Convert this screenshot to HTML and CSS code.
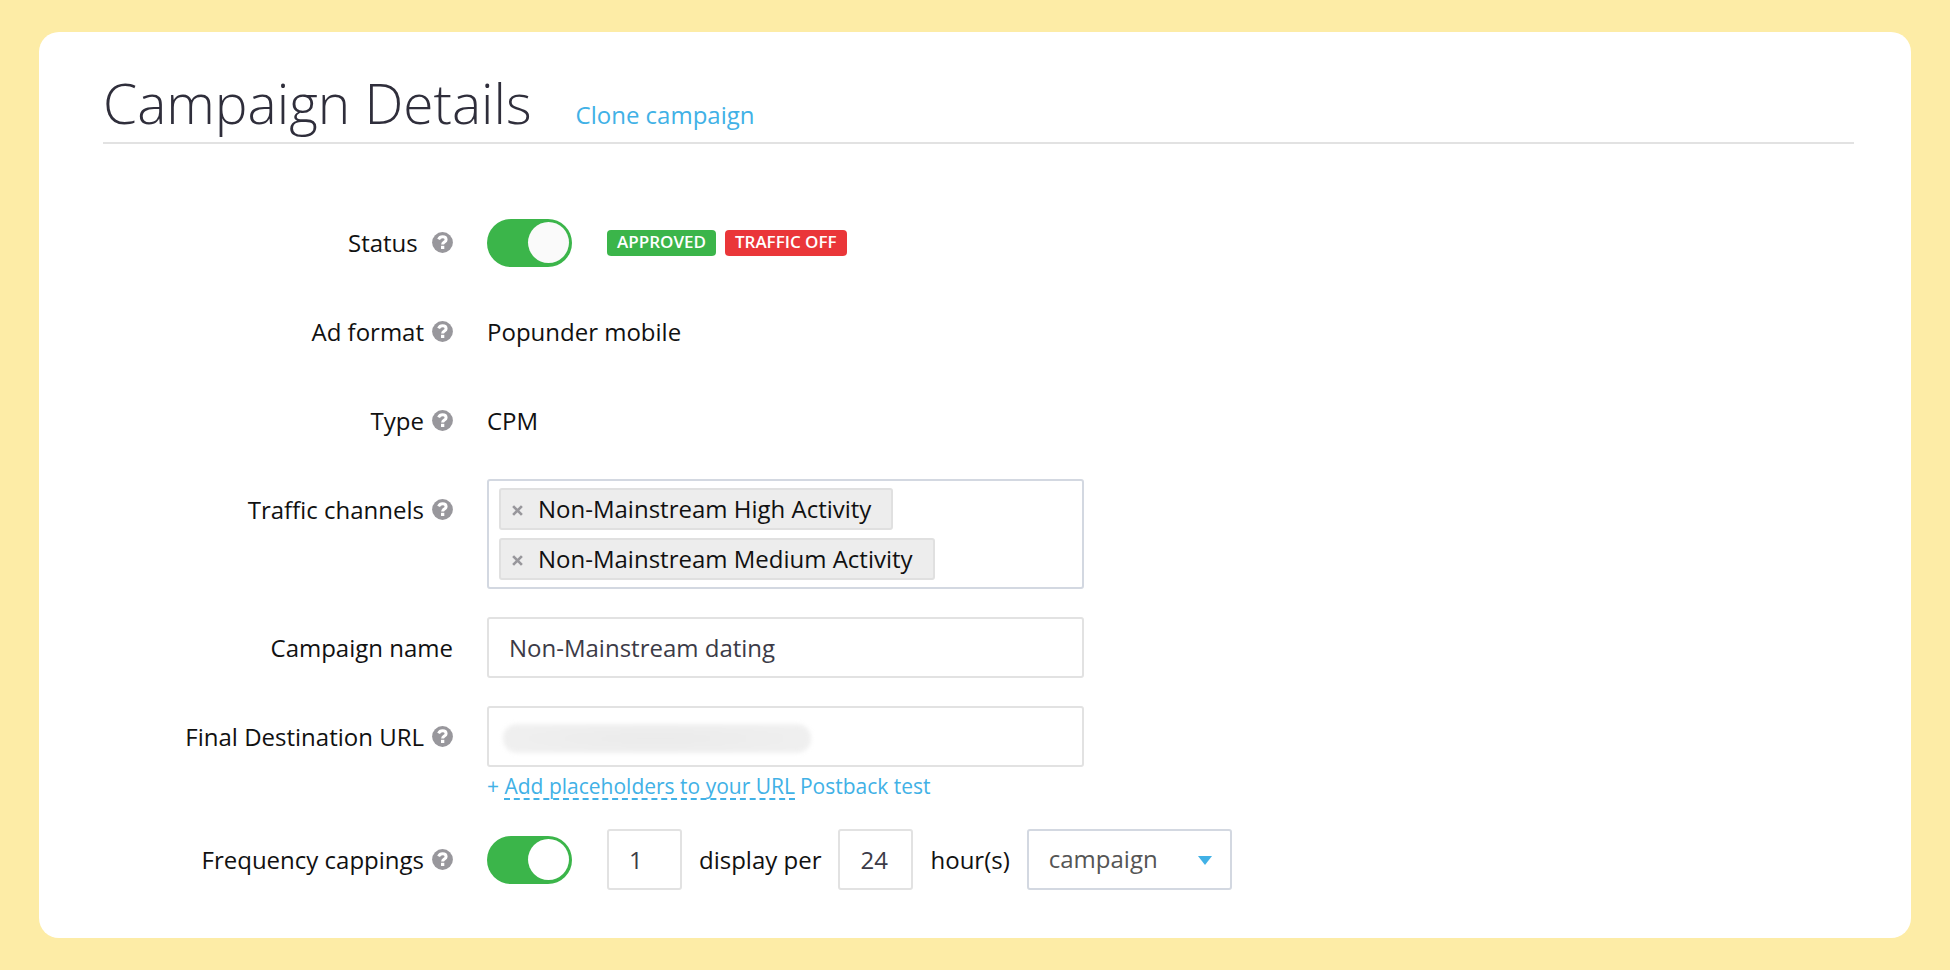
FILE: index.html
```html
<!DOCTYPE html>
<html lang="en">
<head>
    <meta charset="UTF-8">
    <meta name="viewport" content="width=device-width, initial-scale=1.0">
    <title>Campaign Details</title>
    <link rel="stylesheet" href="styles.css">
</head>
<body>
    <!-- Help icon shared by the labels -->
    <svg class="sprite" aria-hidden="true">
        <symbol id="help" viewBox="0 0 21 21">
            <circle cx="10.5" cy="10.5" r="10.4" fill="#98979c"/>
            <path d="M6.6 7.4C7.4 5.6 8.9 4.8 10.5 4.8c2.2 0 3.6 1.2 3.6 2.9 0 2.4-3.5 2.4-3.5 4.9" fill="none" stroke="#fff" stroke-width="3"/>
            <rect x="9" y="13.8" width="3.3" height="3.2" fill="#fff"/>
        </symbol>
    </svg>

    <main class="card">
        <header class="card-header">
            <h1>Campaign Details</h1>
            <a href="#" class="clone-link">Clone campaign</a>
        </header>

        <form class="details">
            <div class="row">
                <label class="row-label" for="status">Status&nbsp;<svg class="help"><use href="#help"/></svg></label>
                <div class="row-content">
                    <input type="checkbox" class="toggle" id="status" checked>
                    <div class="badges">
                        <span class="badge approved">APPROVED</span>
                        <span class="badge traffic-off">TRAFFIC OFF</span>
                    </div>
                </div>
            </div>

            <div class="row">
                <span class="row-label">Ad format<svg class="help"><use href="#help"/></svg></span>
                <div class="row-content">Popunder mobile</div>
            </div>

            <div class="row">
                <span class="row-label">Type<svg class="help"><use href="#help"/></svg></span>
                <div class="row-content">CPM</div>
            </div>

            <div class="row">
                <span class="row-label" id="channelsLabel">Traffic channels<svg class="help"><use href="#help"/></svg></span>
                <ul class="channels" aria-labelledby="channelsLabel">
                    <li class="channel">
                        <button type="button" class="remove" aria-label="Remove"><svg viewBox="0 0 10 10"><path d="M1 1l8 8M9 1L1 9"/></svg></button>
                        Non-Mainstream High Activity
                    </li>
                    <li class="channel">
                        <button type="button" class="remove" aria-label="Remove"><svg viewBox="0 0 10 10"><path d="M1 1l8 8M9 1L1 9"/></svg></button>
                        Non-Mainstream Medium Activity
                    </li>
                </ul>
            </div>

            <div class="row">
                <label class="row-label" for="campaignName">Campaign name</label>
                <input type="text" class="field" id="campaignName" value="Non-Mainstream dating">
            </div>

            <div class="row">
                <label class="row-label" for="destinationUrl">Final Destination URL<svg class="help"><use href="#help"/></svg></label>
                <div class="url-group">
                    <input type="text" class="field" id="destinationUrl">
                    <span class="redacted"></span>
                    <div class="url-links">
                        <a href="#">+ <span class="dashed">Add placeholders to your URL</span></a>
                        <a href="#">Postback test</a>
                    </div>
                </div>
            </div>

            <div class="row">
                <label class="row-label" for="capping">Frequency cappings<svg class="help"><use href="#help"/></svg></label>
                <div class="row-content">
                    <input type="checkbox" class="toggle white" id="capping" checked>
                    <div class="capping">
                        <input type="text" class="field small" id="displays" value="1">
                        <label for="displays">display per</label>
                        <input type="text" class="field small" id="hours" value="24">
                        <label for="hours">hour(s)</label>
                        <div class="select">
                            <select class="field" aria-label="Capping scope">
                                <option>campaign</option>
                            </select>
                            <svg class="arrow" viewBox="0 0 14 9"><path d="M0 0h14L7 9z"/></svg>
                        </div>
                    </div>
                </div>
            </div>
        </form>
    </main>
</body>
</html>
```
FILE: styles.css
```css
* {
    box-sizing: border-box;
}

body {
    margin: 0;
    padding: 32px 39px;
    background: #fdeca6;
    color: #111;
    font-family: "Open Sans", "Noto Sans", sans-serif;
    font-size: 24px;
    line-height: 33px;
}

a {
    color: #41b1e6;
    text-decoration: none;
}

.sprite {
    position: absolute;
    width: 0;
    height: 0;
}

.card {
    background: #fff;
    border-radius: 20px;
    padding: 33px 57px 48px 64px;
}

.card-header {
    display: flex;
    align-items: baseline;
    gap: 44px;
    padding-bottom: 1px;
    border-bottom: 2px solid #e2e2e2;
    margin-bottom: 68px;
}

h1 {
    margin: 0;
    color: #2f2e3b;
    font-size: 55px;
    font-weight: 300;
    line-height: 76px;
}

.details {
    display: flex;
    flex-direction: column;
    gap: 28px;
}

.row {
    display: flex;
    align-items: flex-start;
    gap: 34px;
}

.row-label {
    display: flex;
    align-items: center;
    justify-content: flex-end;
    gap: 8px;
    width: 350px;
    min-height: 61px;
}

.help {
    width: 21px;
    height: 21px;
}

.row-content {
    display: flex;
    align-items: center;
    gap: 35px;
    min-height: 61px;
}

/* Toggles */
.toggle {
    appearance: none;
    display: flex;
    align-items: center;
    justify-content: flex-end;
    width: 85px;
    height: 48px;
    margin: 0;
    padding: 3px;
    border-radius: 24px;
    background: #3bb54a;
    cursor: pointer;
}

.toggle::before {
    content: "";
    width: 41px;
    height: 41px;
    border-radius: 50%;
    background: #fafafa;
}

.toggle.white::before {
    background: #fff;
}

/* Badges */
.badges {
    display: flex;
    gap: 9px;
}

.badge {
    padding: 0 10px 2px;
    border-radius: 4px;
    color: #fff;
    font-size: 17px;
    font-weight: 600;
    line-height: 24px;
}

.approved {
    background: #3bb54a;
}

.traffic-off {
    background: #ea3639;
}

/* Fields */
.field {
    width: 597px;
    height: 61px;
    padding: 0 20px 1px;
    border: 2px solid #e2e2e2;
    border-radius: 3px;
    background: #fff;
    color: #3c3b47;
    font-family: inherit;
    font-size: 24px;
}

.field.small {
    width: 75px;
}

.channels {
    display: flex;
    flex-direction: column;
    align-items: flex-start;
    gap: 8px;
    width: 597px;
    margin: 0;
    padding: 7px 10px;
    border: 2px solid #d3d8e1;
    border-radius: 3px;
    list-style: none;
}

.channel {
    display: flex;
    align-items: center;
    gap: 15px;
    height: 42px;
    padding: 0 20px 2px 11px;
    border: 2px solid #e0e0e0;
    border-radius: 3px;
    background: #ededed;
}

.remove {
    display: flex;
    padding: 4px 0 0;
    border: none;
    background: none;
    cursor: pointer;
}

.remove svg {
    width: 11px;
    height: 11px;
    fill: none;
    stroke: #98979c;
    stroke-width: 2.4;
}

.url-group {
    position: relative;
    display: flex;
    flex-direction: column;
}

.redacted {
    position: absolute;
    top: 18px;
    left: 16px;
    width: 308px;
    height: 29px;
    border-radius: 14px;
    background: radial-gradient(#ebebeb, #f1f1f1);
    filter: blur(2px);
}

.url-links {
    display: flex;
    gap: 5px;
    padding-top: 5px;
    font-size: 21px;
    line-height: 29px;
}

.dashed {
    display: inline-block;
    height: 28px;
    border-bottom: 2px dashed #41b1e6;
}

.capping {
    display: flex;
    align-items: center;
    gap: 17px;
}

.select {
    position: relative;
}

.select .field {
    appearance: none;
    display: block;
    width: 205px;
    padding-bottom: 3px;
    border-color: #d3d8e1;
    color: #555;
}

.arrow {
    position: absolute;
    top: 27px;
    right: 20px;
    width: 14px;
    height: 9px;
    fill: #41b1e6;
    pointer-events: none;
}
```
